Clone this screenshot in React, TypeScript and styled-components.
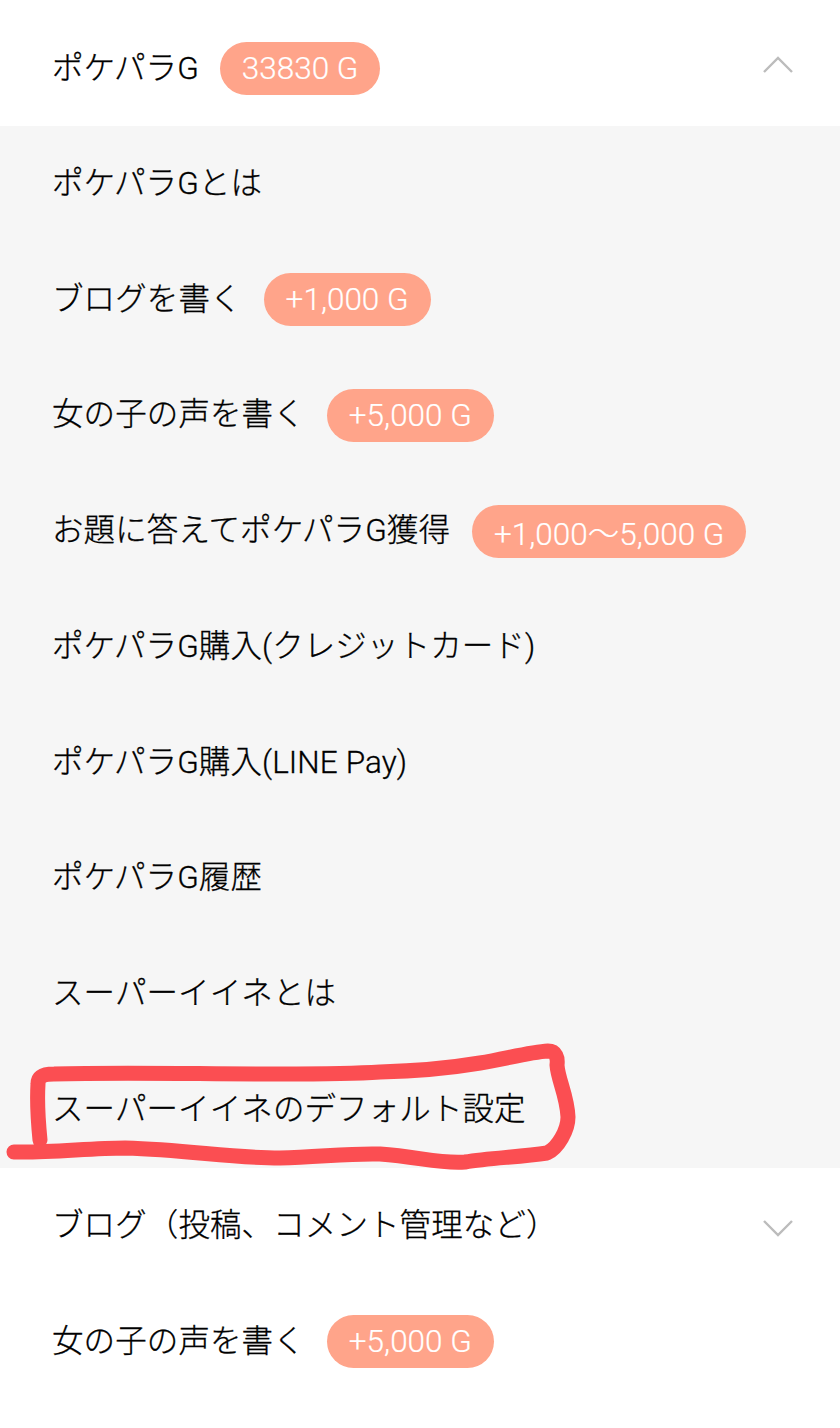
import React from "react";
import styled, { createGlobalStyle } from "styled-components";

const Global = createGlobalStyle`
  html, body { margin: 0; padding: 0; background: #fff; }
  body { font-family: "Roboto", "Noto Sans CJK JP", sans-serif; color: #000; }
`;

const Page = styled.div`
  position: relative;
  width: 840px;
  height: 1428px;
  overflow: hidden;
  background: #fff;
`;

const Header = styled.div`
  display: flex;
  align-items: center;
  gap: 21px;
  height: 126px;
  box-sizing: border-box;
  padding: 11px 46px 0 52px;
`;

const Group = styled.div`
  background: #f6f6f6;
  display: grid;
  grid-auto-rows: 115.78px;
`;

const Row = styled.div`
  display: flex;
  align-items: center;
  gap: 22px;
  padding: 0 46px 0 52px;
  box-sizing: border-box;
  height: 115.78px;
`;

const Label = styled.span`
  font-size: 31.5px;
  line-height: 44px;
  font-weight: 300;
  -webkit-text-stroke: 0.3px #000;
  letter-spacing: 0.1px;
  white-space: nowrap;
  color: #000;
`;

const Pill = styled.span`
  display: inline-flex;
  align-items: center;
  height: 53px;
  padding: 0 22px;
  border-radius: 26.5px;
  background: #ffa48a;
  color: #fff;
  font-size: 31.5px;
  font-weight: 300;
  -webkit-text-stroke: 0.2px #fff;
  white-space: nowrap;
`;

const Chevron = styled.svg<{ $up?: boolean }>`
  margin-left: auto;
  width: 32px;
  height: 20px;
  margin-top: ${(p) => (p.$up ? "-7px" : "4px")};
  fill: none;
  stroke: #bcbcbc;
  stroke-width: 2.4;
`;

const Scribble = styled.svg`
  position: absolute;
  left: 0;
  top: 0;
  pointer-events: none;
  fill: none;
  stroke: #fb4e52;
  stroke-width: 15;
  stroke-linecap: round;
  stroke-linejoin: round;
`;

const items: { label: string; pill?: string }[] = [
  { label: "ポケパラGとは" },
  { label: "ブログを書く", pill: "+1,000 G" },
  { label: "女の子の声を書く", pill: "+5,000 G" },
  { label: "お題に答えてポケパラG獲得", pill: "+1,000〜5,000 G" },
  { label: "ポケパラG購入(クレジットカード)" },
  { label: "ポケパラG購入(LINE Pay)" },
  { label: "ポケパラG履歴" },
  { label: "スーパーイイネとは" },
  { label: "スーパーイイネのデフォルト設定" },
];

export default function App() {
  return (
    <Page>
      <Global />
      <Header>
        <Label>ポケパラG</Label>
        <Pill>33830 G</Pill>
        <Chevron $up viewBox="0 0 32 20">
          <path d="M2 17 L16 3 L30 17" />
        </Chevron>
      </Header>
      <Group>
        {items.map((item) => (
          <Row key={item.label}>
            <Label>{item.label}</Label>
            {item.pill && <Pill>{item.pill}</Pill>}
          </Row>
        ))}
      </Group>
      <Row>
        <Label>ブログ（投稿、コメント管理など）</Label>
        <Chevron viewBox="0 0 32 20">
          <path d="M2 3 L16 17 L30 3" />
        </Chevron>
      </Row>
      <Row>
        <Label>女の子の声を書く</Label>
        <Pill>+5,000 G</Pill>
      </Row>
      <Scribble width="840" height="1428" viewBox="0 0 840 1428">
        <path d="M40 1140 C38 1120 37 1100 38 1084 C38 1076 44 1074 54 1074 C120 1072 200 1074 280 1074 C320 1074 350 1074 380 1072 C420 1071 450 1068 480 1063 C505 1059 530 1052 548 1051 C556 1051 558 1058 557 1065 C558 1080 567 1095 568 1117 C568 1130 558 1148 547 1153 C520 1157 490 1158 465 1162 C440 1164 420 1157 380 1154 C350 1153 320 1157 280 1158 C230 1158 190 1150 125 1148 C90 1148 50 1153 14 1152" />
      </Scribble>
    </Page>
  );
}
